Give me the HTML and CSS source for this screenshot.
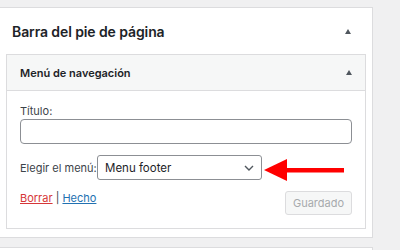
FILE: index.html
```html
<!DOCTYPE html>
<html lang="es">
<head>
<meta charset="utf-8">
<link rel="stylesheet" href="styles.css">
</head>
<body>
<div class="sidebar">
  <div class="sidebar-head">
    <h2 class="sidebar-title">Barra del pie de página</h2>
    <span class="toggle"></span>
  </div>
  <div class="widget">
    <div class="widget-head">
      <h3 class="widget-title">Menú de navegación</h3>
      <span class="toggle"></span>
    </div>
    <div class="widget-body">
      <label class="field-label">Título:</label>
      <div class="text-input"></div>
      <div class="menu-row">
        <span class="menu-label">Elegir el menú:</span>
        <div class="select">
          <span>Menu footer</span>
          <svg class="chevron" width="10" height="6" viewBox="0 0 10 6"><path d="M1 1l4 4 4-4" fill="none" stroke="#50575e" stroke-width="1.4"/></svg>
        </div>
        <svg class="arrow" width="82" height="24" viewBox="0 0 82 24"><polygon points="0,12 23,1 23,23" fill="#ff0000"/><rect x="22" y="10" width="58" height="4.5" fill="#ff0000"/></svg>
      </div>
      <div class="actions">
        <div class="links"><a class="delete">Borrar</a> | <a class="done">Hecho</a></div>
        <button class="saved">Guardado</button>
      </div>
    </div>
  </div>
</div>
<div class="next-panel"></div>
</body>
</html>
```
FILE: styles.css
```css
* { box-sizing: border-box; }
html, body { margin: 0; padding: 0; }
body {
  background: #f0f0f1;
  font-family: Inter, "Liberation Sans", sans-serif;
  color: #1d2327;
  width: 400px;
  height: 250px;
  overflow: hidden;
}
.sidebar {
  margin-top: 7px;
  width: 373px;
  background: #fff;
  border-top: 1px solid #dcdcde;
  border-right: 1px solid #dcdcde;
  border-bottom: 1px solid #dcdcde;
  padding: 0 6px 8px 6px;
}
.sidebar-head {
  height: 46px;
  display: flex;
  align-items: center;
  justify-content: space-between;
  padding: 0 15px 0 6px;
}
.sidebar-title {
  margin: 0;
  font-size: 14px;
  font-weight: 600;
  letter-spacing: -0.1px;
}
.toggle {
  width: 0;
  height: 0;
  border-left: 3.5px solid transparent;
  border-right: 3.5px solid transparent;
  border-bottom: 5px solid #50575e;
}
.widget {
  border: 1px solid #dcdcde;
  background: #fff;
}
.widget-head {
  height: 36px;
  background: #f6f7f7;
  border-bottom: 1px solid #dcdcde;
  display: flex;
  align-items: center;
  justify-content: space-between;
  padding: 0 13px 0 13px;
}
.widget-title {
  margin: 0;
  font-size: 11px;
  font-weight: 600;
}
.widget-body {
  padding: 13px 13px 13px 13px;
}
.field-label {
  display: block;
  font-size: 11px;
  line-height: 15px;
  color: #3c434a;
}
.text-input {
  height: 25px;
  border: 1px solid #8c8f94;
  border-radius: 4px;
  background: #fff;
}
.menu-row {
  margin-top: 11px;
  display: flex;
  align-items: center;
  position: relative;
}
.menu-label {
  font-size: 11px;
  color: #3c434a;
  width: 77px;
  flex: none;
  white-space: nowrap;
}
.select {
  width: 165px;
  height: 25px;
  border: 1px solid #8c8f94;
  border-radius: 3px;
  display: flex;
  align-items: center;
  justify-content: space-between;
  padding: 0 7px 0 7px;
  font-size: 11.5px;
  color: #1d2327;
}
.chevron { display: block; }
.arrow {
  position: absolute;
  left: 244px;
  top: 3px;
}
.actions {
  margin-top: 11px;
  display: flex;
  justify-content: space-between;
  align-items: flex-start;
}
.links {
  font-size: 11px;
  line-height: 14px;
  color: #3c434a;
}
.links a { text-decoration: underline; }
.delete { color: #d63638; }
.done { color: #2271b1; }
.saved {
  width: 67px;
  height: 24px;
  border: 1px solid #dcdcde;
  border-radius: 3px;
  background: #f6f7f7;
  color: #a7aaad;
  font-family: inherit;
  font-size: 11px;
  padding: 0;
}
.next-panel {
  margin-top: 9px;
  width: 373px;
  height: 10px;
  background: #fff;
  border-top: 1px solid #dcdcde;
  border-right: 1px solid #dcdcde;
}
```
